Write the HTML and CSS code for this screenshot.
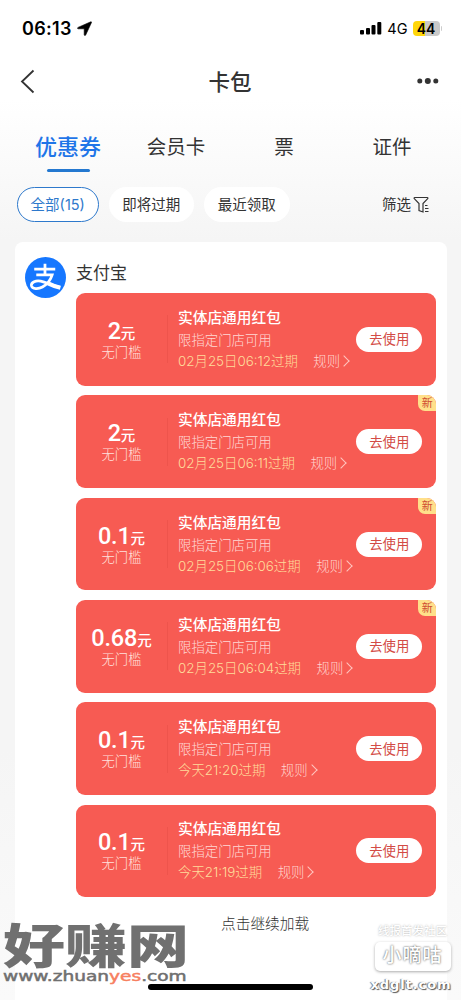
FILE: index.html
```html
<!DOCTYPE html>
<html lang="zh-CN">
<head>
<meta charset="utf-8">
<title>卡包</title>
<link rel="stylesheet" href="styles.css">
</head>
<body>
<div class="screen">
  <header class="status">
    <div class="clock"><span>06:13</span>
      <svg class="locate" width="15" height="15" viewBox="0 0 15 15"><path d="M13.800.8 1 6.400c-.8.4-.5 1.400.3 1.400h5.900v5.900c0 .9 1.100 1.100 1.500.3L14.500 1.500c.2-.5-.2-.9-.7-.7z" stroke="#000" stroke-width=".6"/></svg>
    </div>
    <div class="signals">
      <svg width="22" height="14" viewBox="0 0 22 14"><rect x="0" y="9" width="4" height="4.500" rx="1"/><rect x="6" y="7" width="4" height="6.500" rx="1"/><rect x="11.500" y="4" width="4" height="9.500" rx="1"/><rect x="17.300" y="1" width="4" height="12.500" rx="1"/></svg>
      <span class="net">4G</span>
      <span class="battery">44</span><i class="nub"></i>
    </div>
  </header>
  <nav class="navbar">
    <svg width="16" height="25" viewBox="0 0 16 25"><path d="M13.500 1.500 2 12.500l11.500 11" fill="none" stroke="#333" stroke-width="1.800"/></svg>
    <h1>卡包</h1>
    <svg width="22" height="8" viewBox="0 0 22 8" fill="#333"><circle cx="2.800" cy="4" r="2.500"/><circle cx="10.800" cy="4" r="3"/><circle cx="18.800" cy="4" r="2.500"/></svg>
  </nav>
  <div class="tabs">
    <div class="tab active">优惠券</div><div class="tab">会员卡</div><div class="tab">票</div><div class="tab">证件</div>
  </div>
  <div class="filters">
    <span class="chip on">全部(15)</span><span class="chip">即将过期</span><span class="chip">最近领取</span>
    <span class="filter">筛选<svg width="17" height="18" viewBox="0 0 17 18" fill="none" stroke="#333" stroke-width="1.200"><path d="M1.700 1.500h12.600c.6 0 .8.800.4 1.200L10 7.500V16l-4-1.500v-7L1.300 2.700c-.4-.4-.2-1.200.4-1.200zM12 9.500h2.500M12 12.500h3.500M12 15.500h3.500"/></svg></span>
  </div>
  <main class="panel">
    <svg class="logo" width="41" height="41" viewBox="0 0 40 40"><circle cx="20" cy="20" r="20" fill="#1677ff"/><g fill="none" stroke="#fff" stroke-width="2.700"><path d="M9 11.800h20.500M19.500 6.500v11M11 17.500h15.500C25 22.500 21 27 17 29.300c-4 2.200-10 2.200-10.700-1.300-.6-3.500 4.500-5.500 9-4.500 5.700 1.200 11 4.200 19 6"/><path d="M22 25.500c4 2 8 3.500 12.500 4.500" stroke-width="4"/></g></svg>
    <section class="merchant">
      <h2>支付宝</h2>
      <div class="coupons">
        <article class="coupon"><div class="value"><p class="amount"><span>2</span><small>元</small></p><p class="cond">无门槛</p></div><div class="info"><h3>实体店通用红包</h3><p class="scope">限指定门店可用</p><p class="meta"><span class="date">02月25日06:12过期</span><span>规则</span><i class="chev"></i></p></div><button>去使用</button></article>
        <article class="coupon"><div class="value"><p class="amount"><span>2</span><small>元</small></p><p class="cond">无门槛</p></div><div class="info"><h3>实体店通用红包</h3><p class="scope">限指定门店可用</p><p class="meta"><span class="date">02月25日06:11过期</span><span>规则</span><i class="chev"></i></p></div><button>去使用</button><b class="new">新</b></article>
        <article class="coupon"><div class="value"><p class="amount"><span>0.1</span><small>元</small></p><p class="cond">无门槛</p></div><div class="info"><h3>实体店通用红包</h3><p class="scope">限指定门店可用</p><p class="meta"><span class="date">02月25日06:06过期</span><span>规则</span><i class="chev"></i></p></div><button>去使用</button><b class="new">新</b></article>
        <article class="coupon"><div class="value"><p class="amount"><span>0.68</span><small>元</small></p><p class="cond">无门槛</p></div><div class="info"><h3>实体店通用红包</h3><p class="scope">限指定门店可用</p><p class="meta"><span class="date">02月25日06:04过期</span><span>规则</span><i class="chev"></i></p></div><button>去使用</button><b class="new">新</b></article>
        <article class="coupon"><div class="value"><p class="amount"><span>0.1</span><small>元</small></p><p class="cond">无门槛</p></div><div class="info"><h3>实体店通用红包</h3><p class="scope">限指定门店可用</p><p class="meta"><span class="date">今天21:20过期</span><span>规则</span><i class="chev"></i></p></div><button>去使用</button></article>
        <article class="coupon"><div class="value"><p class="amount"><span>0.1</span><small>元</small></p><p class="cond">无门槛</p></div><div class="info"><h3>实体店通用红包</h3><p class="scope">限指定门店可用</p><p class="meta"><span class="date">今天21:19过期</span><span>规则</span><i class="chev"></i></p></div><button>去使用</button></article>
      </div>
      <p class="more">点击继续加载</p>
    </section>
  </main>
  <div class="home"></div>
  <div class="mark-left">
    <div class="mark-title"><span>好赚网</span></div>
    <div class="mark-url"><span>www.zhuan<em>yes</em>.com</span></div>
  </div>
  <div class="mark-right">
    <span class="m-top">线报首发社区</span>
    <span class="m-box">小嘀咕</span>
    <span class="m-url">xdglt.com</span>
  </div>
</div>
</body>
</html>
```
FILE: styles.css
```css
* { box-sizing: border-box; margin: 0; padding: 0; }
body { font-family: Inter, "Noto Sans CJK SC", sans-serif; color: #333; }
.screen {
  position: relative; width: 461px; height: 1000px; overflow: hidden;
  display: flex; flex-direction: column; white-space: nowrap;
  background: linear-gradient(#fff 0, #fff 100px, #f5f5f5 240px, #f5f5f5 750px, #fafafa 1000px);
}
.status { height: 56px; display: flex; justify-content: space-between; align-items: center; padding: 0 19px 0 22px; color: #000; }
.clock { display: flex; align-items: center; gap: 5px; font-size: 18px; font-weight: 600; letter-spacing: .3px; }
.signals { display: flex; align-items: center; }
.signals svg { margin-right: 5px; }
.net { font-size: 14.500px; margin-right: 5px; }
.battery { width: 27px; height: 15px; border-radius: 4px; background: linear-gradient(90deg, #ffd60a 44%, #c9c9c9 44%); font-size: 14px; font-weight: 600; line-height: 15px; text-align: center; }
.nub { width: 1.500px; height: 5px; margin-left: 1px; background: #ccc; border-radius: 0 2px 2px 0; }
.navbar { height: 50px; display: flex; align-items: center; justify-content: space-between; padding: 0 22px 0 20px; }
.navbar h1 { font-size: 21.500px; font-weight: 500; line-height: 30px; padding: 1px 0 0 7px; }
.tabs { height: 72px; display: grid; grid-template-columns: repeat(4, 108px); padding: 23px 0 0 14px; }
.tab { font-size: 19.500px; line-height: 37px; text-align: center; }
.tab.active { color: #1f75e8; font-size: 22px; font-weight: 500; display: flex; flex-direction: column; align-items: center; }
.tab.active::after { content: ""; width: 43px; height: 2.500px; margin-top: 3px; border-radius: 2px; background: #2478d0; flex: none; }
.filters { height: 64px; display: flex; align-items: center; gap: 10px; padding: 0 31px 11px 17px; }
.chip { height: 35px; width: 85.500px; border-radius: 18px; background: #fff; font-size: 14.500px; line-height: 35px; text-align: center; }
.chip.on { width: 81.500px; border: 1.500px solid #2e79cc; color: #2e79cc; line-height: 33px; font-size: 14.500px; }
.filter { margin-left: auto; display: flex; align-items: center; gap: 2px; font-size: 14.500px; line-height: 34px; }
.panel { flex: 1; margin: 0 14px 0 15px; padding: 15.200px 11px 0 10px; display: flex; gap: 10px; border-radius: 8px 8px 0 0; background: #fff; }
.logo { flex: none; }
.merchant { width: 360.300px; flex: none; }
.merchant h2 { font-size: 17px; font-weight: 400; line-height: 33px; height: 36px; }
.coupons { display: grid; gap: 9.800px; }
.coupon { position: relative; height: 92.500px; display: flex; align-items: center; border-radius: 9px; background: #f75b53; color: #fff; overflow: hidden; padding-right: 14px; }
.value { width: 92px; height: 48px; border-right: 1px solid #ee544c; text-align: center; }
.amount { display: flex; justify-content: center; align-items: baseline; font-family: Roboto, "Noto Sans CJK SC", sans-serif; font-size: 23.500px; font-weight: 500; line-height: 28px; height: 26px; margin-top: 1.500px; }
.amount span { letter-spacing: -.2px; }
.amount small { font-size: 14.500px; }
.cond { font-size: 13.300px; font-weight: 300; line-height: 18px; color: #ffe0dd; }
.info { flex: 1; padding-left: 10px; }
.info h3 { font-size: 14.700px; font-weight: 500; line-height: 23px; }
.scope { font-size: 13.400px; font-weight: 300; line-height: 21px; color: #ffd9d5; }
.meta { display: flex; align-items: center; font-size: 13.400px; font-weight: 300; line-height: 21px; color: #ffd5cf; }
.date { color: #ffdc9b; margin-right: 15.500px; }
.chev { width: 8px; height: 8px; margin-bottom: 1px; border: solid #ffc5bf; border-width: 1px 1px 0 0; transform: rotate(45deg); }
.coupon button { width: 66px; height: 25px; border: 0; border-radius: 13px; background: #fff; color: #d34b45; font: 400 13.400px/24px Inter, "Noto Sans CJK SC", sans-serif; }
.new { position: absolute; right: 0; top: 0; width: 18px; height: 16px; border-radius: 0 0 0 7px; background: #ffe08a; color: #cf4c32; font-size: 11px; font-weight: 400; line-height: 16px; text-align: center; }
.more { font-size: 14.700px; font-weight: 300; line-height: 22px; margin: 16px 0 0 145px; }
.home { position: absolute; left: 148px; top: 984px; width: 165px; height: 6px; border-radius: 3px; background: #000; }
.mark-left { position: absolute; left: 3px; top: 919px; color: #707070; }
.mark-title { height: 50px; font: 900 47px/47px "Noto Sans CJK SC", sans-serif; }
.mark-title span { display: inline-block; transform: scaleX(1.320); transform-origin: left; }
.mark-url { font: 400 14px/15px "DejaVu Sans", sans-serif; -webkit-text-stroke: .5px; }
.mark-url span { display: inline-block; transform: scaleX(1.325); transform-origin: left; }
.mark-url em { font-style: normal; color: #f7805f; }
.mark-right { position: absolute; left: 366px; top: 922px; width: 90px; display: flex; flex-direction: column; align-items: center; color: #fff; text-shadow: 0 1px 2px #999; }
.m-top { font-size: 11.500px; line-height: 18px; font-weight: 500; align-self: flex-end; margin-right: 9px; text-shadow: 0 0 2px #aaa; }
.m-box { width: 76px; height: 29px; margin: 2px 0 1px 3px; border-radius: 5px; background: #fff; box-shadow: 0 1px 3px #aaa; font-size: 19px; font-weight: 500; line-height: 28px; letter-spacing: 1px; text-align: center; text-shadow: 0 0 2px #333; }
.m-url { font: 700 13px/25px "DejaVu Sans", sans-serif; letter-spacing: .9px; text-shadow: 1px 1px 1px #555, -1px 0 1px #777; }
```
